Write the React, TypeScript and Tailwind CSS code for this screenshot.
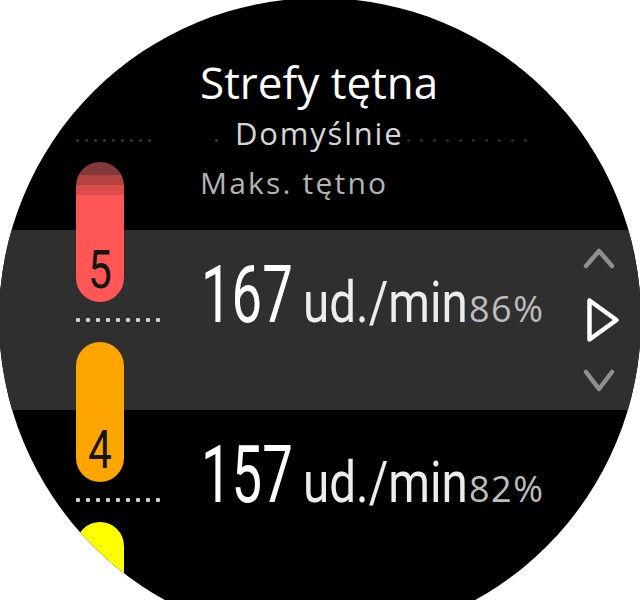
type Zone = {
  value: string;
  unit: string;
  percent: string;
};

const ZONES: Zone[] = [
  { value: "167", unit: "ud./min", percent: "86%" },
  { value: "157", unit: "ud./min", percent: "82%" },
];

function Dots({ light }: { light?: boolean }) {
  return (
    <div className="flex gap-[6px]">
      {Array.from({ length: 9 }).map((_, i) => (
        <span
          key={i}
          className={
            light
              ? "w-[4px] h-[4px] rounded-[1px] bg-[#d2d2d2]"
              : "w-[3px] h-[3px] rounded-full bg-[#3a3a3a]"
          }
        />
      ))}
    </div>
  );
}

function ValueRow({ zone }: { zone: Zone }) {
  return (
    <div className="flex items-baseline whitespace-nowrap pl-[12px] pt-[25px]">
      <span className="w-[92px] font-[Roboto,sans-serif] text-[80px] leading-[80px] text-white">
        <span className="inline-block origin-left scale-x-[0.68]">{zone.value}</span>
      </span>
      <span className="ml-[10px] w-[162px] font-[Roboto,sans-serif] text-[57px] leading-[57px] text-[#ededed]">
        <span className="inline-block origin-left scale-x-[0.835]">{zone.unit}</span>
      </span>
      <span className="ml-[4px] font-['Open_Sans',sans-serif] text-[36px] leading-[36px] tracking-[1.5px] text-[#bdbdbd]">
        {zone.percent}
      </span>
    </div>
  );
}

export default function App() {
  return (
    <div className="w-[640px] h-[600px] overflow-hidden bg-white">
      <div className="-ml-px -mt-[2px] w-[642px] h-[642px] rounded-full overflow-hidden bg-black grid grid-cols-[190px_390px_62px] grid-rows-[232px_180px_230px]">
        {/* selected row highlight */}
        <div className="col-start-1 col-span-3 row-start-2 bg-[#2f2f2f]" />

        {/* zone pills */}
        <div className="col-start-1 row-start-1 row-span-3 flex flex-col pl-[77px]">
          <div className="mt-[141px]">
            <Dots />
          </div>
          <div className="mt-[20px] w-[48px] h-[140px] shrink-0 rounded-full overflow-hidden flex flex-col">
            <div className="h-[13px] bg-[#853838]" />
            <div className="h-[10px] bg-[#b34343]" />
            <div className="h-[10px] bg-[#dc4c4c]" />
            <div className="flex-1 bg-[#ff5656] flex items-end justify-center pb-[5px]">
              <span className="inline-block scale-x-[0.8] font-[Roboto,sans-serif] text-[53px] leading-[53px] text-[#141414]">
                5
              </span>
            </div>
          </div>
          <div className="mt-[16px]">
            <Dots light />
          </div>
          <div className="mt-[20px] w-[48px] h-[140px] shrink-0 rounded-full bg-[#ffa500] flex items-end justify-center pb-[5px]">
            <span className="inline-block scale-x-[0.8] font-[Roboto,sans-serif] text-[53px] leading-[53px] text-[#141414]">
              4
            </span>
          </div>
          <div className="mt-[16px]">
            <Dots light />
          </div>
          <div className="mt-[20px] w-[48px] h-[140px] shrink-0 rounded-full bg-[#ffff00]" />
        </div>

        {/* header */}
        <div className="col-start-2 row-start-1 flex flex-col pl-[11px] pt-[62px] font-['Open_Sans',sans-serif] whitespace-nowrap">
          <div className="text-[44px] leading-[44px] text-white">Strefy tętna</div>
          <div className="mt-[14px] flex items-center">
            <span className="ml-[15px] mt-[14px] w-[3px] h-[3px] rounded-full bg-[#3a3a3a]" />
            <span className="ml-[17px] text-[31px] leading-[31px] tracking-[1.8px] text-[#d6d6d6]">
              Domyślnie
            </span>
            <span className="ml-[4px] mt-[14px] flex gap-[10px]">
              {Array.from({ length: 10 }).map((_, i) => (
                <span key={i} className="w-[3px] h-[3px] rounded-full bg-[#2e2e2e]" />
              ))}
            </span>
          </div>
          <div className="mt-[19px] text-[30px] leading-[30px] tracking-[2.2px] text-[#b4b4b4]">
            Maks. tętno
          </div>
        </div>

        {/* values */}
        <div className="col-start-2 row-start-2">
          <ValueRow zone={ZONES[0]} />
        </div>
        <div className="col-start-2 row-start-3">
          <ValueRow zone={ZONES[1]} />
        </div>

        {/* scroll / select hints */}
        <div className="col-start-3 row-start-2 flex flex-col items-start">
          <svg className="mt-[17px] ml-[3px]" width="34" height="24" viewBox="0 0 34 24" fill="none">
            <path d="M4 19 L17 4 L30 19" stroke="#8f8f8f" strokeWidth="4.5" strokeLinecap="round" strokeLinejoin="round" />
          </svg>
          <svg className="mt-[25px] ml-[6px]" width="36" height="50" viewBox="0 0 36 50" fill="none">
            <path d="M4.5 4.5 L4.5 43.5 L31.5 24 Z" stroke="#ffffff" strokeWidth="4.5" strokeLinejoin="round" />
          </svg>
          <svg className="mt-[22px] ml-[3px]" width="34" height="26" viewBox="0 0 34 26" fill="none">
            <path d="M4 4 L17 21 L30 4" stroke="#8f8f8f" strokeWidth="4.5" strokeLinecap="round" strokeLinejoin="round" />
          </svg>
        </div>
      </div>
    </div>
  );
}
